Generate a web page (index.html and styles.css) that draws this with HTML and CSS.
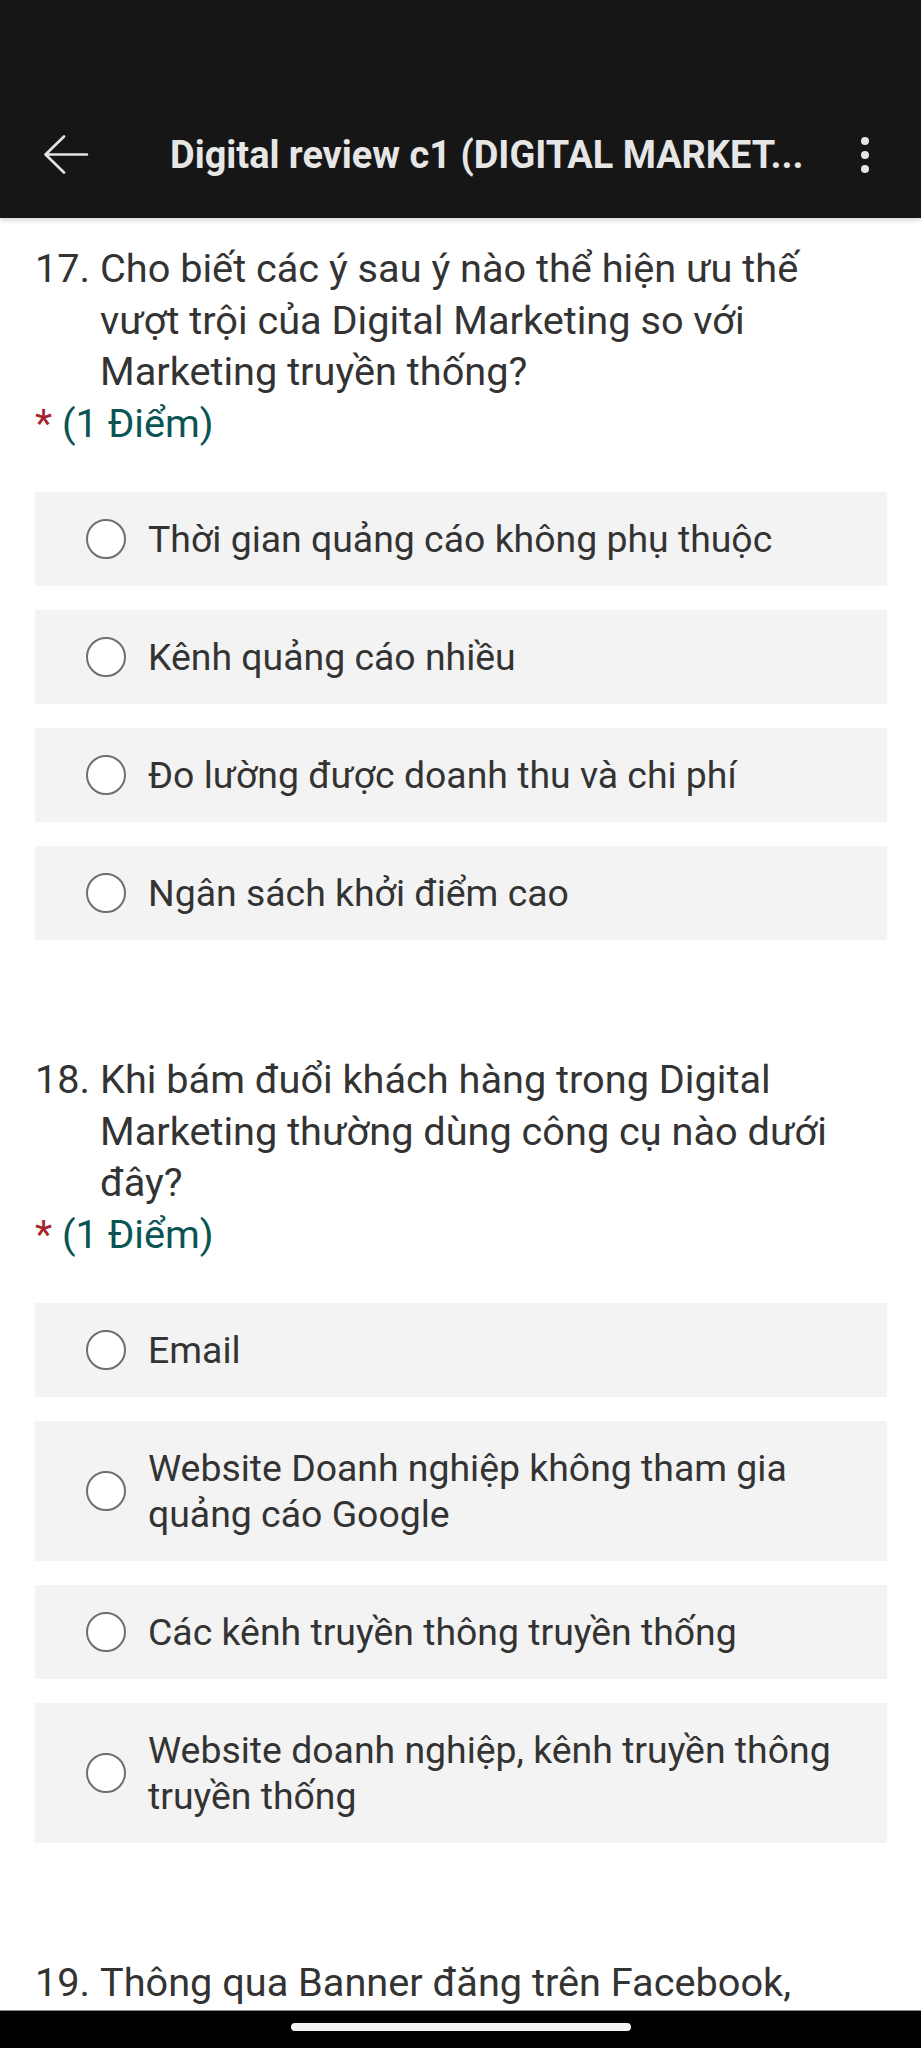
FILE: index.html
```html
<!DOCTYPE html>
<html lang="vi">
<head>
<meta charset="utf-8">
<title>Digital review c1</title>
<link rel="stylesheet" href="styles.css">
</head>
<body>
<div class="screen">
  <header class="appbar">
    <div class="toolbar">
      <svg class="back" width="46" height="40" viewBox="0 0 46 40" aria-hidden="true">
        <path d="M44 19.5 H3 M21 1.5 L2.5 19.5 L21 37.5" fill="none" stroke="#e4e4e4" stroke-width="2.6" stroke-linecap="round" stroke-linejoin="round"/>
      </svg>
      <div class="title">Digital review c1 (DIGITAL MARKET...</div>
      <div class="more" aria-hidden="true"><span></span><span></span><span></span></div>
    </div>
  </header>

  <main class="content">
    <section class="question">
      <div class="q-head">
        <span class="q-num">17.</span>
        <span class="q-text">Cho biết các ý sau ý nào thể hiện ưu thế vượt trội của Digital Marketing so với Marketing truyền thống?</span>
      </div>
      <div class="q-points"><span class="req">*</span> (1 Điểm)</div>
      <div class="options">
        <div class="option"><span class="radio"></span><span class="opt-text">Thời gian quảng cáo không phụ thuộc</span></div>
        <div class="option"><span class="radio"></span><span class="opt-text">Kênh quảng cáo nhiều</span></div>
        <div class="option"><span class="radio"></span><span class="opt-text">Đo lường được doanh thu và chi phí</span></div>
        <div class="option"><span class="radio"></span><span class="opt-text">Ngân sách khởi điểm cao</span></div>
      </div>
    </section>

    <section class="question">
      <div class="q-head">
        <span class="q-num">18.</span>
        <span class="q-text">Khi bám đuổi khách hàng trong Digital Marketing thường dùng công cụ nào dưới đây?</span>
      </div>
      <div class="q-points"><span class="req">*</span> (1 Điểm)</div>
      <div class="options">
        <div class="option"><span class="radio"></span><span class="opt-text">Email</span></div>
        <div class="option"><span class="radio"></span><span class="opt-text">Website Doanh nghiệp không tham gia quảng cáo Google</span></div>
        <div class="option"><span class="radio"></span><span class="opt-text">Các kênh truyền thông truyền thống</span></div>
        <div class="option"><span class="radio"></span><span class="opt-text">Website doanh nghiệp, kênh truyền thông truyền thống</span></div>
      </div>
    </section>

    <section class="question">
      <div class="q-head">
        <span class="q-num">19.</span>
        <span class="q-text">Thông qua Banner đăng trên Facebook,</span>
      </div>
    </section>
  </main>

  <footer class="navbar"><span class="pill"></span></footer>
</div>
</body>
</html>
```

FILE: styles.css
```css
* { box-sizing: border-box; }

html, body {
  margin: 0;
  padding: 0;
  background: #ffffff;
}

body {
  font-family: Roboto, "Noto Sans", "Liberation Sans", sans-serif;
  color: #333333;
}

.screen {
  width: 921px;
  height: 2048px;
  display: flex;
  flex-direction: column;
  overflow: hidden;
}

/* ---------- app bar ---------- */
.appbar {
  flex: 0 0 218px;
  background: #161616;
  padding-top: 92px;
  box-shadow: 0 2px 5px rgba(0, 0, 0, 0.18);
  position: relative;
  z-index: 1;
}

.toolbar {
  height: 126px;
  display: flex;
  align-items: center;
  padding-left: 43px;
  padding-right: 52px;
}

.back {
  flex: 0 0 auto;
  display: block;
}

.title {
  flex: 1 1 auto;
  margin-left: 81px;
  font-size: 37.9px;
  font-weight: 700;
  color: #e6e6e6;
  white-space: nowrap;
}

.more {
  display: flex;
  flex-direction: column;
  gap: 6px;
}

.more span {
  display: block;
  width: 8px;
  height: 8px;
  border-radius: 50%;
  background: #e6e6e6;
}

/* ---------- content ---------- */
.content {
  flex: 1 1 auto;
  overflow: hidden;
  padding: 25px 34px 0 35px;
}

.question {
  margin-bottom: 114px;
}

.q-head {
  display: flex;
  font-size: 39.7px;
  line-height: 51.5px;
}

.q-num {
  flex: 0 0 65px;
}

.q-text {
  flex: 1 1 auto;
  padding-right: 10px;
}

.q-points {
  font-size: 39.7px;
  line-height: 51.5px;
  color: #0b5454;
}

.req {
  color: #a4262c;
}

.options {
  margin-top: 43px;
  display: flex;
  flex-direction: column;
  gap: 24px;
}

.option {
  background: #f3f3f3;
  display: flex;
  align-items: center;
  padding: 24px 30px 24px 51px;
  min-height: 94px;
}

.radio {
  flex: 0 0 40px;
  width: 40px;
  height: 40px;
  border: 2.5px solid #6e6e6e;
  border-radius: 50%;
  background: #ffffff;
}

.opt-text {
  margin-left: 22px;
  font-size: 37.4px;
  line-height: 46px;
  color: #333333;
}

/* ---------- bottom nav ---------- */
.navbar {
  flex: 0 0 38px;
  background: #000000;
  border-top: 1px solid #8a8a8a;
  display: flex;
  justify-content: center;
  padding-top: 12px;
}

.pill {
  display: block;
  width: 340px;
  height: 8px;
  border-radius: 4px;
  background: #f2f2f2;
}
```
